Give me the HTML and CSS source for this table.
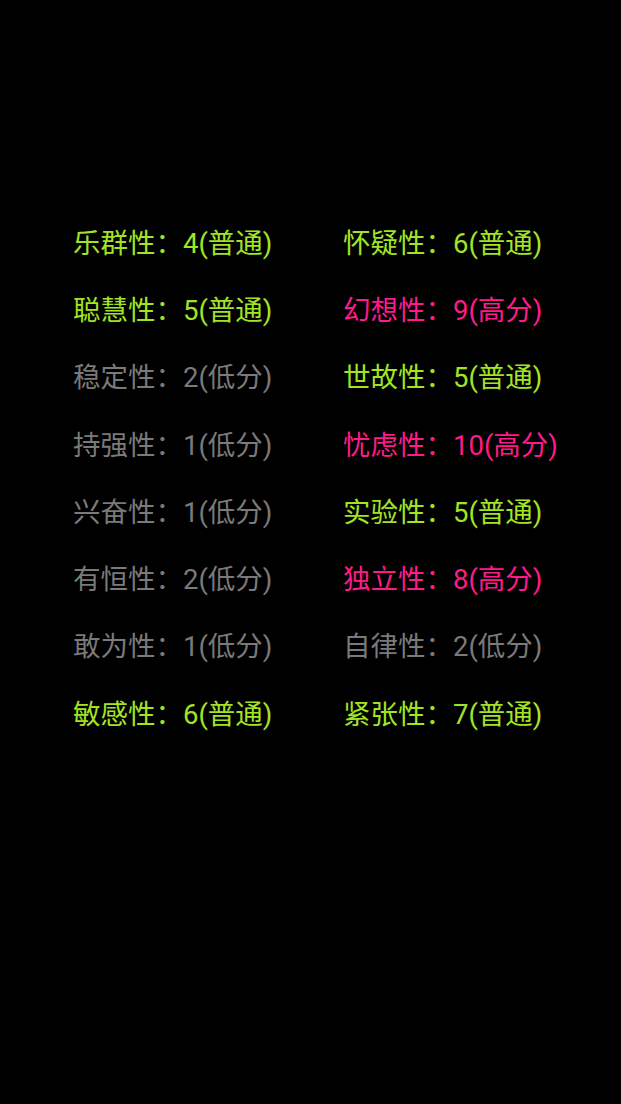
FILE: index.html
```html
<!DOCTYPE html>
<html lang="zh-CN">
<head>
<meta charset="utf-8">
<link rel="stylesheet" href="styles.css">
</head>
<body>
<div class="grid">
  <div class="item ok">乐群性：4(普通)</div>
  <div class="item ok">怀疑性：6(普通)</div>
  <div class="item ok">聪慧性：5(普通)</div>
  <div class="item hi">幻想性：9(高分)</div>
  <div class="item lo">稳定性：2(低分)</div>
  <div class="item ok">世故性：5(普通)</div>
  <div class="item lo">持强性：1(低分)</div>
  <div class="item hi">忧虑性：10(高分)</div>
  <div class="item lo">兴奋性：1(低分)</div>
  <div class="item ok">实验性：5(普通)</div>
  <div class="item lo">有恒性：2(低分)</div>
  <div class="item hi">独立性：8(高分)</div>
  <div class="item lo">敢为性：1(低分)</div>
  <div class="item lo">自律性：2(低分)</div>
  <div class="item ok">敏感性：6(普通)</div>
  <div class="item ok">紧张性：7(普通)</div>
</div>
</body>
</html>
```
FILE: styles.css
```css
html, body {
  margin: 0;
  padding: 0;
  background: #000;
  height: 100%;
}
body {
  font-family: Roboto, "Noto Sans CJK SC", sans-serif;
}
.grid {
  display: grid;
  grid-template-columns: 270px 270px;
  grid-auto-rows: 67.3px;
  padding: 207px 0 0 73px;
}
.item {
  font-size: 27.5px;
  display: flex;
  align-items: center;
  white-space: nowrap;
}
.ok { color: #a2e424; }
.hi { color: #ff1a8c; }
.lo { color: #7a7a7a; }
```
